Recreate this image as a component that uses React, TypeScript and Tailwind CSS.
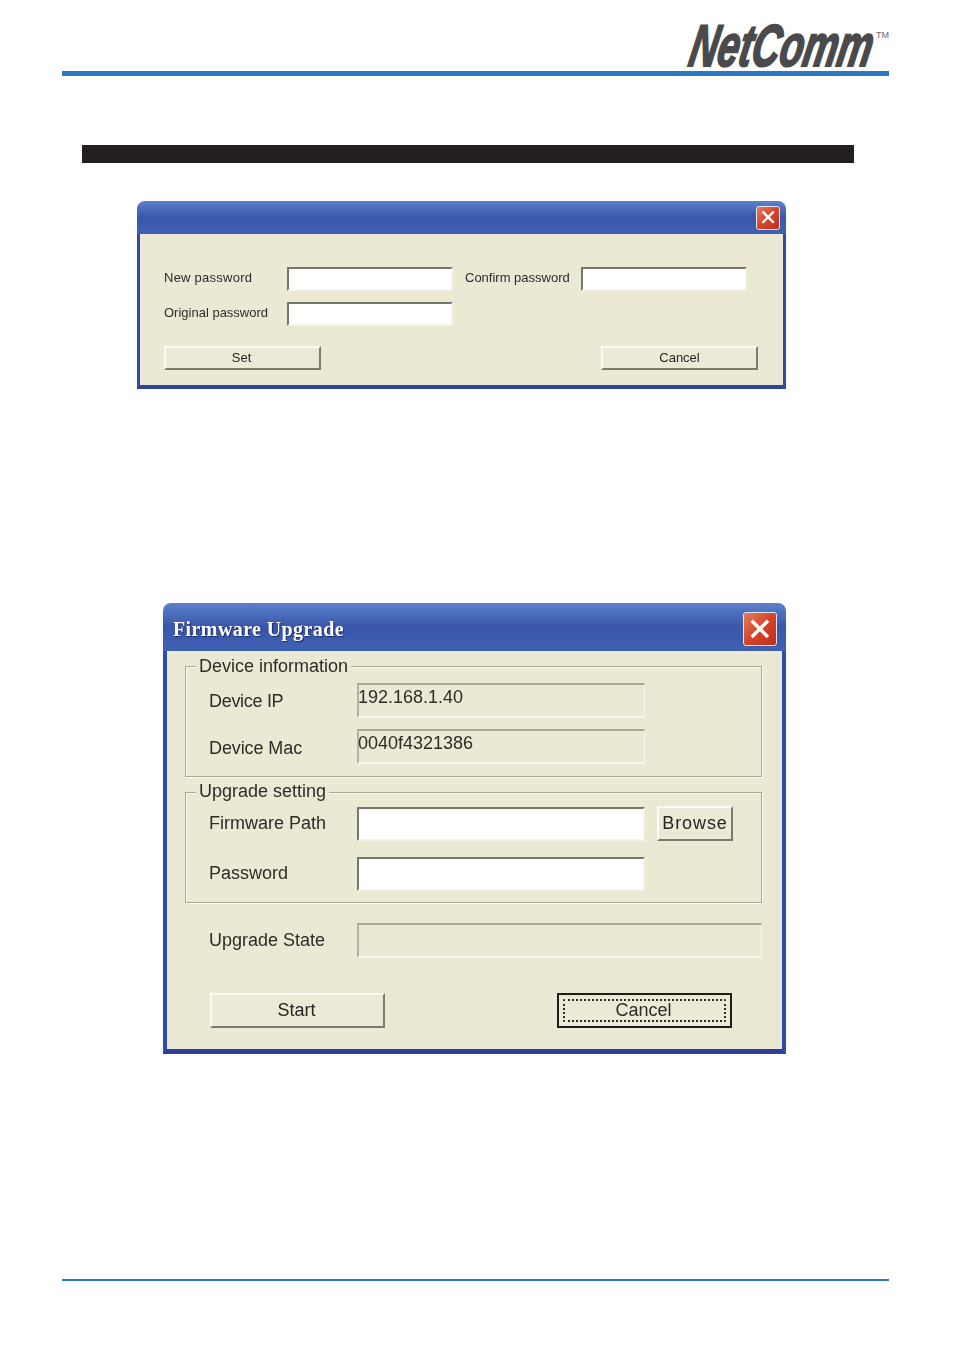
const sans = { fontFamily: '"Liberation Sans", Arial, sans-serif' };

function CloseButton({ size, stroke }: { size: string; stroke: number }) {
  return (
    <div className={`${size} flex items-center justify-center rounded-[3px] border border-[#e8e4ea] bg-gradient-to-br from-[#e27a5c] via-[#d5442a] to-[#bd2c1a]`}>
      <svg viewBox="0 0 24 24" className="h-[74%] w-[74%]">
        <path d="M5 5 L19 19 M19 5 L5 19" stroke="#fff" strokeWidth={stroke} strokeLinecap="square" fill="none" />
      </svg>
    </div>
  );
}

function Sunken({ className = "", children }: { className?: string; children?: React.ReactNode }) {
  return (
    <div className={`border-t-2 border-l-2 border-r border-b-2 border-t-[#a9a796] border-l-[#b5b3a2] border-r-[#f8f7ee] border-b-[#f8f7ee] ${className}`}>
      {children}
    </div>
  );
}

function InputBox({ className = "" }: { className?: string }) {
  return (
    <div className={`border-2 border-t-[#77766a] border-l-[#77766a] border-r-[#f4f3e6] border-b-[#f4f3e6] bg-white ${className}`} />
  );
}

function XpButton({ className = "", children }: { className?: string; children: React.ReactNode }) {
  return (
    <div className={`flex items-center justify-center border-2 border-t-[#fbfaf2] border-l-[#fbfaf2] border-r-[#7d7b6e] border-b-[#7d7b6e] bg-[#ece9d6] text-[#262622] ${className}`}>
      {children}
    </div>
  );
}

function Logo() {
  return (
    <svg width="205" height="66" viewBox="0 0 205 66" aria-label="NetComm" className="-mb-[12px]">
      <g transform="translate(3 52.5) skewX(-11) scale(0.655 1)">
        <text
          x="0"
          y="0"
          fontFamily='"Liberation Sans", Arial, sans-serif'
          fontWeight="700"
          fontStyle="italic"
          fontSize="59"
          fill="#4a4a4c"
          stroke="#4a4a4c"
          strokeWidth="2"
        >
          NetComm
        </text>
      </g>
      <text x="192" y="25" fontFamily='"Liberation Sans", Arial, sans-serif' fontSize="9" fill="#6a6a6c">
        TM
      </text>
    </svg>
  );
}

export default function App() {
  return (
    <div className="flex h-[1352px] w-[953px] flex-col bg-white pt-[13px]" style={sans}>
      <div className="ml-[62px] flex w-[827px] justify-end">
        <Logo />
      </div>
      <div className="ml-[62px] mt-[4px] h-[5px] w-[827px] bg-[#2b78c5]" />
      <div className="ml-[82px] mt-[69px] h-[18px] w-[772px] bg-[#231f20]" />

      {/* Password dialog */}
      <div className="ml-[137px] mt-[38px] flex h-[188px] w-[649px] flex-col blur-[0.4px]">
        <div className="flex h-[33px] items-center justify-end rounded-t-[8px] bg-gradient-to-b from-[#5b82cc] via-[#3a55a9] to-[#3f62b4] pr-[6px]">
          <CloseButton size="h-[24px] w-[24px]" stroke={3.5} />
        </div>
        <div className="flex flex-1 flex-col border-x-[3px] border-b-[4px] border-x-[#2f4ca6] border-b-[#2c459f] bg-[#ebe9d4] pl-[24px] pr-[25px] pt-[33px] text-[13px] text-[#2c2c28]">
          <div className="flex h-[24px] items-center">
            <span className="w-[123px] pb-[2px] tracking-[0.25px]">New password</span>
            <InputBox className="h-[24px] w-[166px]" />
            <span className="ml-[12px] w-[116px] pb-[2px]">Confirm password</span>
            <InputBox className="h-[24px] w-[166px]" />
          </div>
          <div className="mt-[11px] flex h-[24px] items-center">
            <span className="w-[123px] pb-[2px]">Original password</span>
            <InputBox className="h-[24px] w-[166px]" />
          </div>
          <div className="mt-[20px] flex justify-between">
            <XpButton className="h-[24px] w-[157px] pr-[2px]">Set</XpButton>
            <XpButton className="h-[24px] w-[157px]">Cancel</XpButton>
          </div>
        </div>
      </div>

      {/* Firmware dialog */}
      <div className="ml-[163px] mt-[214px] flex h-[451px] w-[623px] flex-col blur-[0.4px]">
        <div className="flex h-[48px] items-center justify-between rounded-t-[8px] bg-gradient-to-b from-[#5b82cc] via-[#3a55a9] to-[#3f62b4] pl-[10px] pr-[9px]">
          <span
            className="pt-[3px] text-[20px] font-bold tracking-[0.4px] text-white [text-shadow:1px_1px_1px_#1a2a6a]"
            style={{ fontFamily: '"Liberation Serif", "Times New Roman", serif' }}
          >
            Firmware Upgrade
          </span>
          <div className="mt-[4px]">
            <CloseButton size="h-[34px] w-[34px]" stroke={3.5} />
          </div>
        </div>
        <div className="flex flex-1 flex-col border-x-[4px] border-b-[5px] border-x-[#2f4ca6] border-b-[#2c3f9a] bg-[#ebe9d4] pl-[18px] pr-[20px] pt-[15px] text-[18px] text-[#2c2c28]">
          <div className="h-[111px] border border-[#a9a796] shadow-[inset_1px_1px_0_#fbfaf2,1px_1px_0_#fbfaf2]">
            <div className="-mt-[11px] ml-[10px] h-[20px] w-fit bg-[#ebe9d4] px-[3px] leading-[20px]">Device information</div>
            <div className="ml-[23px] mt-[7px] flex items-center">
              <span className="w-[148px] pt-[2px] tracking-[-0.3px]">Device IP</span>
              <Sunken className="h-[35px] w-[288px] indent-[-1px] leading-[24px]">192.168.1.40</Sunken>
            </div>
            <div className="ml-[23px] mt-[11px] flex items-center">
              <span className="w-[148px] pt-[3px] tracking-[-0.1px]">Device Mac</span>
              <Sunken className="h-[35px] w-[288px] indent-[-1px] leading-[24px]">0040f4321386</Sunken>
            </div>
          </div>

          <div className="mt-[15px] h-[111px] border border-[#a9a796] shadow-[inset_1px_1px_0_#fbfaf2,1px_1px_0_#fbfaf2]">
            <div className="-mt-[12px] ml-[10px] h-[20px] w-fit bg-[#ebe9d4] px-[3px] leading-[20px]">Upgrade setting</div>
            <div className="ml-[23px] mt-[6px] flex items-center">
              <span className="w-[148px] pb-[2px]">Firmware Path</span>
              <InputBox className="h-[34px] w-[288px]" />
              <XpButton className="ml-[12px] -mt-[1px] h-[35px] w-[76px] tracking-[0.9px]">Browse</XpButton>
            </div>
            <div className="ml-[23px] mt-[16px] flex items-center">
              <span className="w-[148px] pb-[2px]">Password</span>
              <InputBox className="h-[34px] w-[288px]" />
            </div>
          </div>

          <div className="ml-[24px] mt-[20px] flex items-center">
            <span className="w-[148px]">Upgrade State</span>
            <Sunken className="h-[35px] w-[405px]" />
          </div>

          <div className="ml-[25px] mt-[35px] flex w-[522px] justify-between">
            <XpButton className="h-[35px] w-[175px] pr-[2px]">Start</XpButton>
            <div className="flex h-[35px] w-[175px] items-center justify-center border-2 border-[#1c1c1a] bg-[#ece9d6] p-[4px]">
              <div className="flex h-full w-full items-center justify-center rounded-[2px] border-2 border-dotted border-[#2c2c28] pr-[2px]">Cancel</div>
            </div>
          </div>
        </div>
      </div>

      <div className="ml-[62px] mt-[225px] h-[2px] w-[827px] bg-[#2b78c5]" />
    </div>
  );
}
